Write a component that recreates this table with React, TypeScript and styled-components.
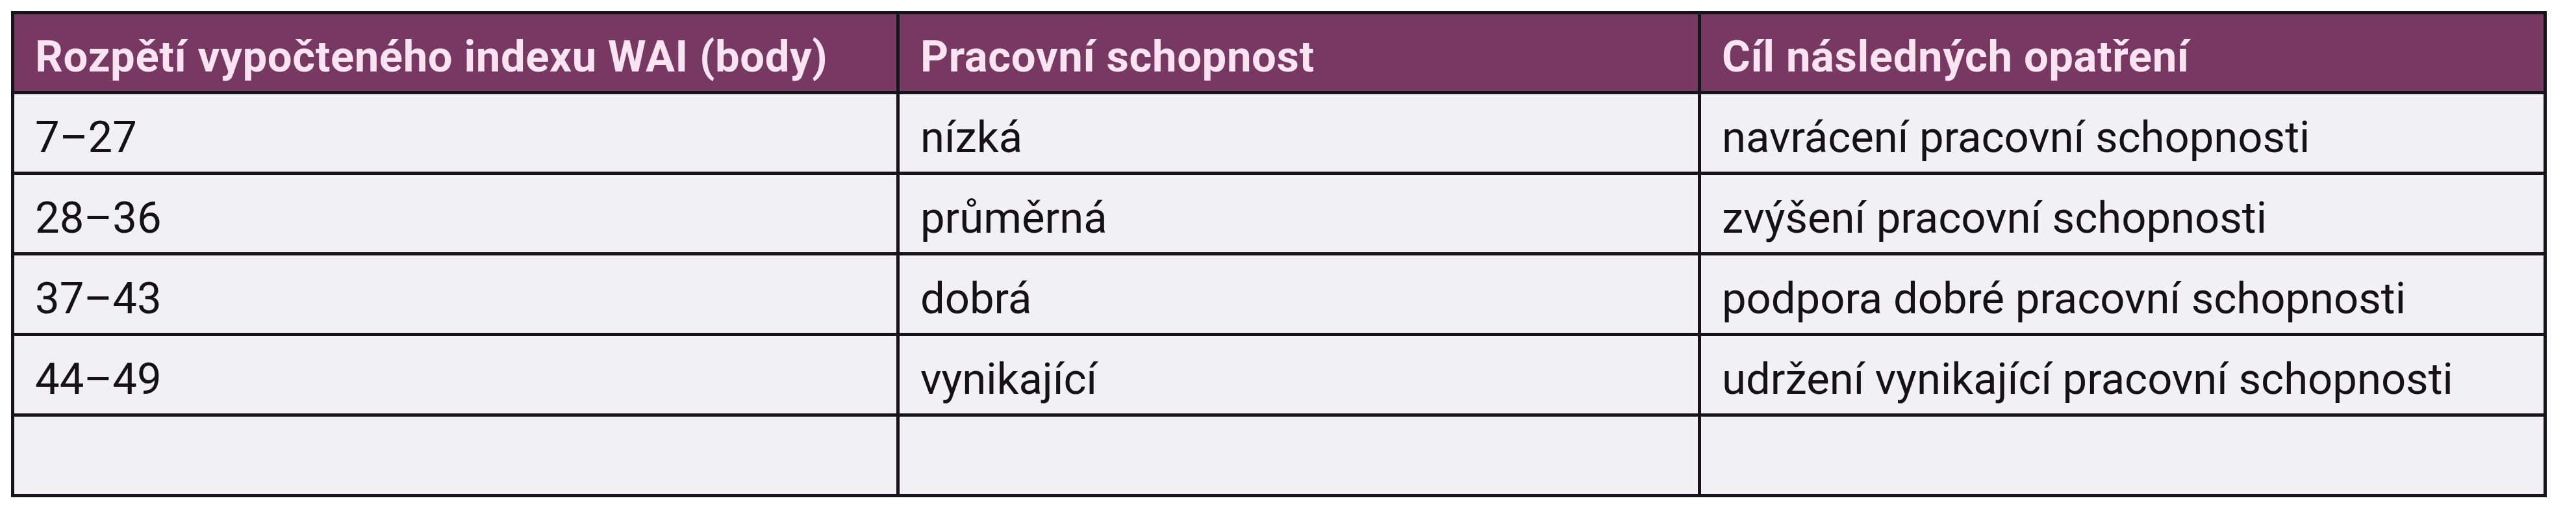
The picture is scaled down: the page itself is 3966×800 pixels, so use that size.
import React from "react";
import styled, { createGlobalStyle } from "styled-components";

const Global = createGlobalStyle`
  html, body { margin: 0; padding: 0; background: #ffffff; }
  body { font-family: Roboto, "Liberation Sans", sans-serif; }
`;

const Page = styled.div`
  padding: 17px 0 0 17px;
`;

const Table = styled.div`
  display: grid;
  grid-template-columns: 1358px 1229px 1297px;
  grid-template-rows: 118px repeat(5, 119px);
  gap: 5px;
  padding: 5px;
  width: max-content;
  background: #16131a;
`;

const HeaderCell = styled.div`
  display: flex;
  align-items: center;
  padding: 12px 20px 0 32px;
  background: #773862;
  color: #fbe4f2;
  font-weight: 700;
  font-size: 67px;
  letter-spacing: 0.6px;
  white-space: nowrap;
`;

const Cell = styled.div`
  display: flex;
  align-items: center;
  padding: 12px 20px 0 32px;
  background: #f0f0f5;
  color: #141216;
  font-weight: 400;
  font-size: 67px;
  white-space: nowrap;
`;

const headers = [
  "Rozpětí vypočteného indexu WAI (body)",
  "Pracovní schopnost",
  "Cíl následných opatření",
];

const rows: string[][] = [
  ["7–27", "nízká", "navrácení pracovní schopnosti"],
  ["28–36", "průměrná", "zvýšení pracovní schopnosti"],
  ["37–43", "dobrá", "podpora dobré pracovní schopnosti"],
  ["44–49", "vynikající", "udržení vynikající pracovní schopnosti"],
  ["", "", ""],
];

export default function App() {
  return (
    <Page>
      <Global />
      <Table>
        {headers.map((h) => (
          <HeaderCell key={h}>{h}</HeaderCell>
        ))}
        {rows.map((r, i) =>
          r.map((c, j) => <Cell key={`${i}-${j}`}>{c}</Cell>)
        )}
      </Table>
    </Page>
  );
}
